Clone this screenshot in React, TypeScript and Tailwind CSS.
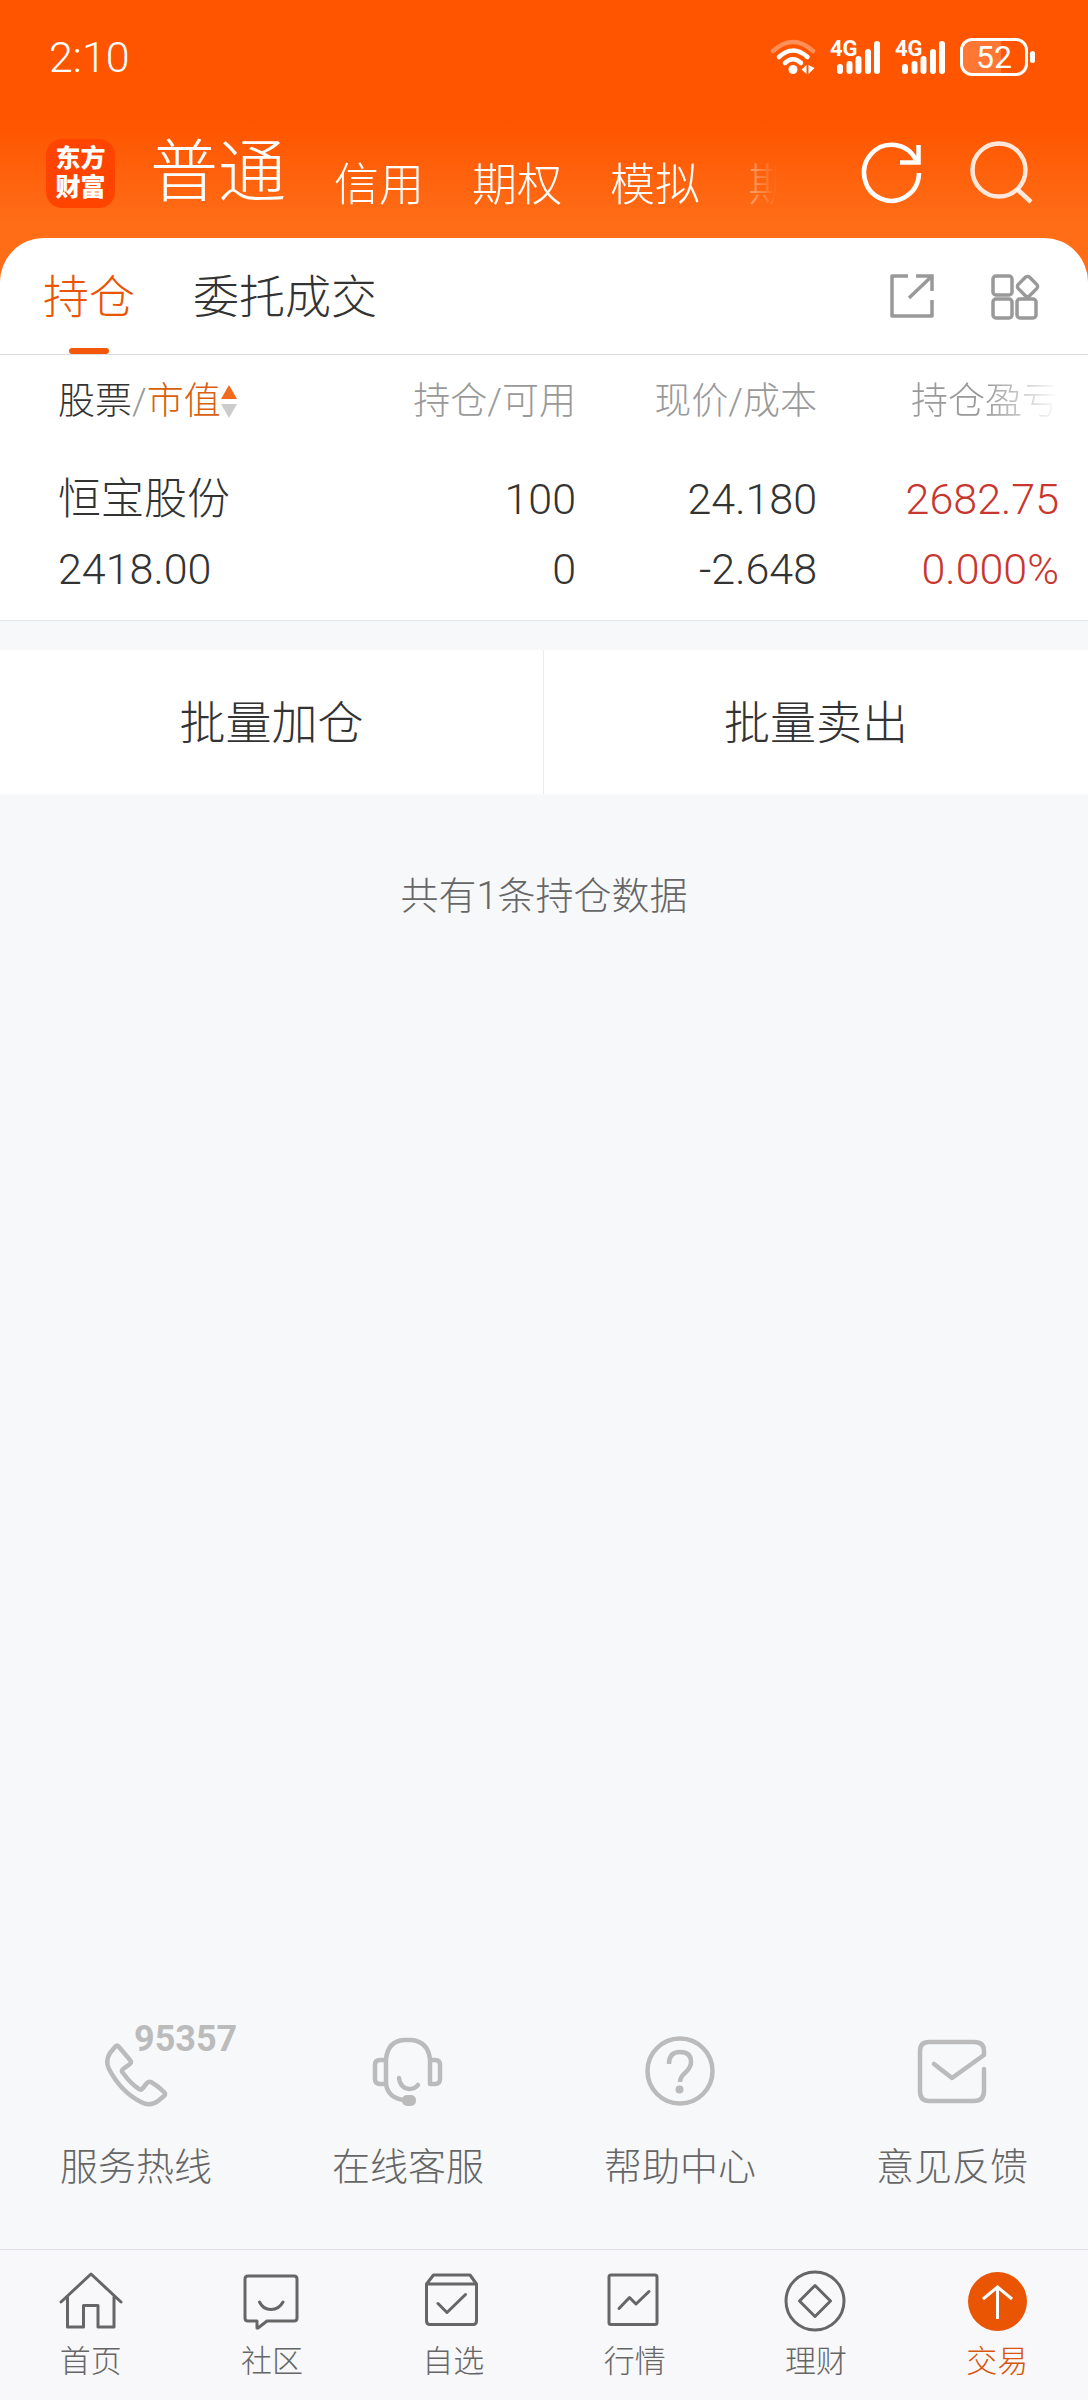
import type { ReactNode } from "react";

const fontStack = "font-['Roboto','Noto_Sans_CJK_SC',sans-serif]";

function SignalIcon() {
  return (
    <svg width="52" height="38" viewBox="0 0 52 38" fill="none" stroke="#fff" strokeWidth="6" strokeLinecap="round" aria-hidden="true">
      <path d="M10 29v4M19.500 26v7M28.500 21v12M38 14v19M47 6v27" />
    </svg>
  );
}

function Signal() {
  return (
    <div className="relative">
      <SignalIcon />
      <span className="absolute top-0 left-0 text-[22px] leading-[22px] font-bold">4G</span>
    </div>
  );
}

function WifiIcon() {
  return (
    <svg width="48" height="40" viewBox="0 0 48 40" fill="none" stroke="#fff" strokeWidth="4.500" strokeLinecap="round" aria-hidden="true">
      <path d="M4 14Q24 -4 44 14" opacity="0.35" />
      <path d="M10 20Q24 7 38.500 20" />
      <path d="M16 26Q24 18.500 32 26" />
      <circle cx="24" cy="32.500" r="4.500" fill="#fff" stroke="none" />
      <path d="M37.500 28v9l-5-4.500zM39.500 28v9l6-6z" fill="#fff" stroke="none" />
    </svg>
  );
}

function StatusBar() {
  return (
    <div className="flex h-[108px] items-center justify-between pt-1.5 pr-[53px] pl-[49px]">
      <span className="text-[43px] leading-[50px] font-light">2:10</span>
      <div className="flex items-center gap-[13px]">
        <WifiIcon />
        <Signal />
        <Signal />
        <div className="flex items-center gap-0.5">
          <div className="relative flex h-[38px] w-[68px] items-center justify-center overflow-hidden rounded-xl border-[3px] border-white">
            <div className="absolute inset-y-0 left-0 w-[38px] bg-white/20" />
            <span className="relative text-[32px] leading-[34px]">52</span>
          </div>
          <div className="h-3 w-[5px] rounded-full bg-white" />
        </div>
      </div>
    </div>
  );
}

const accounts = ["信用", "期权", "模拟", "期货"];

function AppBar() {
  return (
    <div className="flex h-[130px] items-center pr-[52px] pl-[46px]">
      <div className="flex size-[69px] shrink-0 flex-col items-center justify-center rounded-2xl bg-[#ff4400] text-[25px] leading-[29px] font-black">
        <span>东方</span>
        <span>财富</span>
      </div>
      <nav className="ml-[35px] flex min-w-0 flex-1 items-end gap-12 overflow-hidden whitespace-nowrap [mask-image:linear-gradient(to_right,black_calc(100%-72px),transparent)]">
        <button className="text-[68px] leading-[80px] font-light">普通</button>
        {accounts.map((a) => (
          <button key={a} className="text-[45px] leading-[54px] font-light">
            {a}
          </button>
        ))}
      </nav>
      <div className="ml-[78px] flex shrink-0 gap-9">
        <button aria-label="刷新">
          <svg width="72" height="72" viewBox="0 0 72 72" fill="none" stroke="#fff" strokeWidth="4.500">
            <path d="M63 36A27.500 28 0 1 1 60 23" />
            <path d="M62.500 8V25.500H44" />
          </svg>
        </button>
        <button aria-label="搜索">
          <svg width="72" height="72" viewBox="0 0 72 72" fill="none" stroke="#fff" strokeOpacity="0.85" strokeWidth="4.500">
            <circle cx="35" cy="33" r="26.500" />
            <path d="M53 52L67 65" />
          </svg>
        </button>
      </div>
    </div>
  );
}

function TabBar() {
  return (
    <div className="flex h-[117px] items-stretch justify-between border-b border-[#dcdcdc] pr-[46px] pl-[43px]">
      <div className="flex gap-[58px] text-[46px] leading-[60px] font-light">
        <button className="relative pt-0.5 text-[#ea5504]">
          持仓
          <span className="absolute bottom-0 left-1/2 h-1.5 w-10 -translate-x-1/2 rounded-full bg-[#f4580b]" />
        </button>
        <button className="pt-0.5 text-[#333]">委托成交</button>
      </div>
      <div className="flex items-center gap-12">
        <button aria-label="分享">
          <svg width="56" height="56" viewBox="0 0 56 56" fill="none" stroke="#999" strokeWidth="3.500" strokeLinejoin="round">
            <path d="M26 8H10V48H50V32" />
            <path d="M34 8H50V23M50 8L27 30" strokeLinejoin="miter" />
          </svg>
        </button>
        <button aria-label="更多功能">
          <svg width="56" height="56" viewBox="0 0 56 56" fill="none" stroke="#999" strokeWidth="3.500">
            <rect x="7" y="8" width="19" height="19" rx="3" />
            <rect x="7" y="31" width="19" height="19" rx="3" />
            <rect x="31" y="31" width="19" height="19" rx="3" />
            <rect x="33.500" y="10.500" width="16" height="16" rx="3" transform="rotate(45 41.500 18.500)" />
          </svg>
        </button>
      </div>
    </div>
  );
}

const cell = "p-0 pt-[17px] pb-4 text-right leading-[70px] font-light";
const head = "h-[92px] p-0 pt-0.5 text-right leading-[44px] font-light whitespace-nowrap";

function Holdings() {
  return (
    <div className="border-b border-[#e6e6e6] pr-[29px] pl-[58px]">
      <table className="w-full table-fixed border-collapse text-[43px] text-[#333]">
        <thead className="text-[37px] text-[#999]">
          <tr>
            <th className="h-[92px] p-0 pt-0.5 text-left leading-[44px] font-light whitespace-nowrap">
              <button className="flex items-center">
                <span className="text-[#333]">股票</span>/<span className="text-[#d9600f]">市值</span>
                <svg width="16" height="34" viewBox="0 0 16 34" aria-hidden="true">
                  <path d="M8 0L16 14H0z" fill="#f26a1b" />
                  <path d="M8 33L0 19H16z" fill="#ccc" />
                </svg>
              </button>
            </th>
            <th className={head + " w-[180px]"}>持仓/可用</th>
            <th className={head + " w-[241px]"}>现价/成本</th>
            <th className={head + " w-[242px]"}>
              <span className="[mask-image:linear-gradient(to_right,black_50%,transparent)]">持仓盈亏</span>
            </th>
          </tr>
        </thead>
        <tbody>
          <tr>
            <td className="p-0 pt-[17px] pb-4 text-left leading-[70px] font-light">
              <div>恒宝股份</div>
              <div>2418.00</div>
            </td>
            <td className={cell}>
              <div>100</div>
              <div>0</div>
            </td>
            <td className={cell}>
              <div>24.180</div>
              <div>-2.648</div>
            </td>
            <td className={cell + " text-[#c8372f]"}>
              <div>2682.75</div>
              <div>0.000%</div>
            </td>
          </tr>
        </tbody>
      </table>
    </div>
  );
}

function ServiceIcon({ children }: { children: ReactNode }) {
  return (
    <svg width="80" height="80" viewBox="0 0 80 80" fill="none" stroke="#bbb" strokeWidth="4.500" strokeLinecap="round" strokeLinejoin="round" aria-hidden="true">
      {children}
    </svg>
  );
}

const services = [
  {
    label: "服务热线",
    badge: "95357",
    icon: (
      <path d="M19 16Q21 13 23 16L34 29Q36 31 34 33L27 38Q25 40 27 42Q35 53 43 58Q45 59.500 47 57L51 52Q53 50 55 51Q62 55 68 61Q70 63 68 65L62 70Q54 76 45 71Q25 61 13 38Q9 30 14 22Z" />
    ),
  },
  {
    label: "在线客服",
    icon: (
      <>
        <path d="M18 53V28Q20 10 36 9H44Q60 11 62 28V53H67Q72 53 72 48V34Q72 29 67 29H62" />
        <path d="M18 29H12Q7 29 7 34V48Q7 53 12 53H18Q20 67 36 69" />
        <path d="M31 47Q32 57 41 58Q47 58 50 54" />
        <rect x="34" y="64" width="14" height="11" rx="5" fill="#bbb" stroke="none" />
      </>
    ),
  },
  {
    label: "帮助中心",
    icon: (
      <>
        <circle cx="40" cy="40" r="32.500" />
        <path d="M29 33Q29 21 40 21Q51 21 51 31Q51 36 46 41Q40 46 40 51" strokeLinecap="butt" />
        <circle cx="39.500" cy="58.500" r="4" fill="#bbb" stroke="none" />
      </>
    ),
  },
  {
    label: "意见反馈",
    icon: <path d="M22 33L40 47L72 24V20Q72 11 62 11H17Q8 11 8 20V60Q8 70 17 70H62Q72 70 72 60V38" />,
  },
];

function Services() {
  return (
    <div className="grid grid-cols-4 pb-[54px]">
      {services.map((s) => (
        <a key={s.label} href="#" className="flex flex-col items-center gap-7 text-[38px] leading-[56px] font-light text-[#666]">
          <span className="relative">
            <ServiceIcon>{s.icon}</ServiceIcon>
            {s.badge && (
              <span className="absolute -top-2.5 left-[38px] text-[36px] leading-[36px] font-bold text-[#bbb]">{s.badge}</span>
            )}
          </span>
          {s.label}
        </a>
      ))}
    </div>
  );
}

const navItems = [
  {
    label: "首页",
    icon: <path d="M2 32L32 4L62 32M8.500 27V57H24.500V35.500H39V57H55V27" />,
  },
  {
    label: "社区",
    icon: <path d="M8 6H54Q57 6 57 9V48Q57 51 54 51H27L18 58H17V51H8Q5 51 5 48V9Q5 6 8 6M19.500 32Q23 39.500 31 39.500T43 32" />,
  },
  {
    label: "自选",
    icon: <path d="M5.500 14H55.500V51Q55.500 54.500 52 54.500H9Q5.500 54.500 5.500 51V14L12.500 5H49L55.500 14M17 33.500L26 42.500L44.500 24.500" />,
  },
  {
    label: "行情",
    icon: (
      <>
        <rect x="6" y="5" width="48" height="49.500" rx="2" />
        <path d="M16 38.500L26.500 27.500L33 34L46 21.500" />
      </>
    ),
  },
  {
    label: "理财",
    icon: (
      <>
        <circle cx="31" cy="31" r="29" />
        <path d="M31 15.500L46.500 31L31 46.500L15.500 31Z" />
      </>
    ),
  },
  {
    label: "交易",
    active: true,
    icon: (
      <>
        <circle cx="32.500" cy="31.500" r="29.500" fill="#ea5504" stroke="none" />
        <path d="M32.500 49V17M18 29L32.500 17L47 29" stroke="#fff" strokeLinecap="butt" strokeLinejoin="miter" />
      </>
    ),
  },
];

function BottomNav() {
  return (
    <nav className="grid h-[151px] grid-cols-6 border-t border-[#dfe1e4] bg-[#f8f8fa] pt-5">
      {navItems.map((n) => (
        <a
          key={n.label}
          href="#"
          className={
            n.active
              ? "flex flex-col items-center gap-1.5 text-[31px] leading-[44px] font-light text-[#d9560f]"
              : "flex flex-col items-center gap-1.5 text-[31px] leading-[44px] font-light text-[#666]"
          }
        >
          <svg width="64" height="64" viewBox="0 0 64 64" fill="none" stroke="#666" strokeWidth="3" strokeLinecap="round" strokeLinejoin="round" aria-hidden="true">
            {n.icon}
          </svg>
          {n.label}
        </a>
      ))}
    </nav>
  );
}

export default function App() {
  return (
    <div lang="zh-CN" className={"flex min-h-screen flex-col bg-[#f7f8fa] " + fontStack}>
      <header className="-mb-11 bg-linear-to-b from-[#ff5500] from-[125px] to-[#ff6d16] to-[225px] pb-11 text-white">
        <StatusBar />
        <AppBar />
      </header>
      <main className="flex flex-1 flex-col">
        <section className="rounded-t-[44px] bg-white">
          <TabBar />
          <Holdings />
        </section>
        <div className="mt-[29px] grid grid-cols-2 divide-x divide-[#ececec] bg-white text-[46px] leading-[142px] font-light text-[#333]">
          <button className="pt-0.5">批量加仓</button>
          <button className="pt-0.5">批量卖出</button>
        </div>
        <p className="mt-[74px] text-center text-[38px] leading-[56px] font-light text-[#666]">共有1条持仓数据</p>
        <div className="flex-1" />
        <Services />
      </main>
      <BottomNav />
    </div>
  );
}
